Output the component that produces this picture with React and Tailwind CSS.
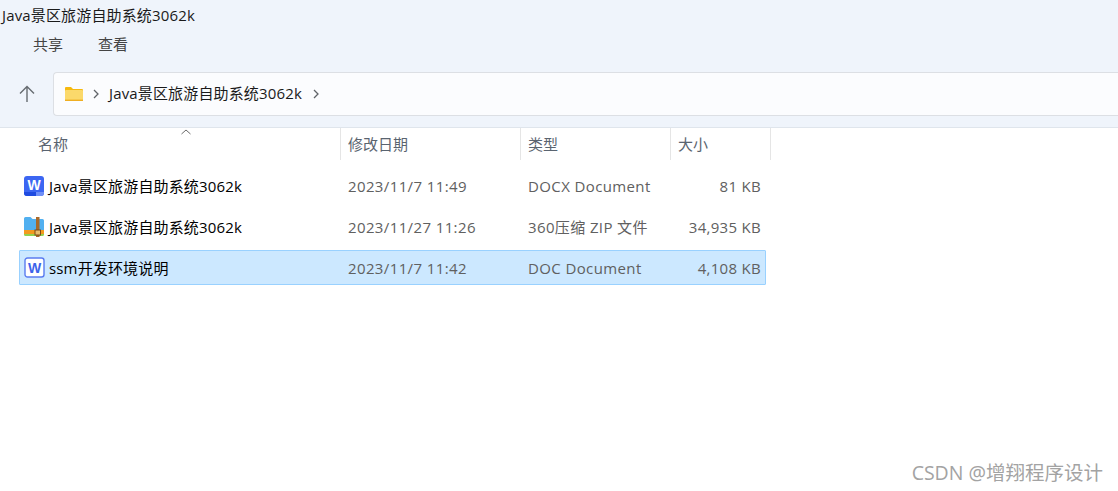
import React from "react";

function WordIcon({ outline }) {
  if (outline) {
    return (
      <svg width="21" height="21" viewBox="0 0 21 21" className="shrink-0">
        <rect x="1" y="1" width="19" height="19" rx="2.5" fill="#ffffff" stroke="#5b7cf0" strokeWidth="1.4" />
        <text x="10.5" y="15.5" textAnchor="middle" fontSize="14" fontWeight="700" fill="#3d63ea" fontFamily="Liberation Sans, sans-serif">W</text>
      </svg>
    );
  }
  return (
    <svg width="20" height="20" viewBox="0 0 20 20" className="shrink-0">
      <rect x="0" y="0" width="20" height="20" rx="3" fill="#3c66f2" />
      <path d="M0 16h12v4H3a3 3 0 0 1-3-3z" fill="#1f4be0" />
      <path d="M12 16h8v1a3 3 0 0 1-3 3h-5z" fill="#6f8ff7" />
      <text x="10" y="14" textAnchor="middle" fontSize="14" fontWeight="700" fill="#ffffff" fontFamily="Liberation Sans, sans-serif">W</text>
    </svg>
  );
}

function ZipIcon() {
  return (
    <svg width="21" height="20" viewBox="0 0 21 20" className="shrink-0">
      <path d="M0 1.5A1.5 1.5 0 0 1 1.5 0h5l2 2h10A1.5 1.5 0 0 1 20 3.5V13H0z" fill="#52b0f0" />
      <rect x="0" y="13" width="20" height="4" fill="#f39a1e" />
      <path d="M0 17h20v.5a1.5 1.5 0 0 1-1.5 1.5h-17A1.5 1.5 0 0 1 0 17.500z" fill="#93d04e" />
      <rect x="12" y="0" width="3.500" height="20" fill="#a8692a" />
      <rect x="11" y="13" width="5.500" height="5" fill="#e8bd6e" stroke="#7c4a18" strokeWidth="1" />
    </svg>
  );
}

function Folder() {
  return (
    <svg width="18" height="14" viewBox="0 0 18 14">
      <path d="M0 1a1 1 0 0 1 1-1h5l2 2h9a1 1 0 0 1 1 1v2H0z" fill="#f6b90f" />
      <rect x="0" y="3" width="18" height="11" rx="1" fill="#fbd96b" />
      <rect x="0" y="12.6" width="18" height="1.4" fill="#efae22" />
    </svg>
  );
}

function Chevron() {
  return (
    <svg width="6" height="10" viewBox="0 0 6 10" className="shrink-0">
      <path d="M1 1l4 4-4 4" fill="none" stroke="#5f6368" strokeWidth="1.3" />
    </svg>
  );
}

function Row({ icon, name, date, type, size, selected }) {
  return (
    <div
      className={
        "flex items-center h-[35px] w-[747px] ml-[19px] border rounded-[1px] " +
        (selected ? "bg-[#cce8ff] border-[#99d1ff]" : "border-transparent")
      }
    >
      <div className="w-[29px] pl-[4px] flex items-center shrink-0">{icon}</div>
      <div className="w-[299px] pt-[2px] text-[15px] tracking-[0.15px] text-black shrink-0">{name}</div>
      <div className="w-[180px] pt-[2px] text-[15px] tracking-[0.38px] text-[#606060] shrink-0">{date}</div>
      <div className="w-[150px] pt-[2px] text-[15px] tracking-[0.38px] text-[#606060] shrink-0">{type}</div>
      <div className="w-[83px] pt-[2px] text-[15px] tracking-[0.3px] text-[#606060] text-right shrink-0">{size}</div>
    </div>
  );
}

function Col({ w, pad = "pl-[7px]", children }) {
  return (
    <div className={"h-[32px] flex items-center border-r border-[#e5e5e5] text-[15px] text-[#5a6470] shrink-0 " + w + " " + pad}>
      {children}
    </div>
  );
}

export default function App() {
  return (
    <div className="w-[1118px] h-[491px] relative overflow-hidden bg-white font-['Open_Sans','Noto_Sans_CJK_SC',sans-serif]">
      <div className="h-[128px] bg-[#eff4fb] border-b border-[#dfe5ec] flex flex-col">
        <div className="h-[30px] pl-[2px] text-[15px] tracking-[0.15px] leading-[30px] text-[#1a1a1a]">Java景区旅游自助系统3062k</div>
        <div className="flex h-[42px] pl-[33px] gap-[35px] text-[15px] leading-[28px] text-[#444]">
          <span>共享</span>
          <span>查看</span>
        </div>
        <div className="flex items-start">
          <div className="w-[53px] h-[44px] flex items-center justify-center">
            <svg width="16" height="18" viewBox="0 0 16 18">
              <path d="M8 17V1.5M1 8.5l7-7 7 7" fill="none" stroke="#666b70" strokeWidth="1.4" />
            </svg>
          </div>
          <div className="flex-1 h-[44px] bg-[#fbfcfe] border border-[#dcdfe4] border-r-0 rounded-l-[4px] flex items-center pl-[11px] text-[15px] tracking-[0.15px] text-[#1a1a1a]">
            <Folder />
            <span className="ml-[10px]"><Chevron /></span>
            <span className="ml-[10px] mb-[2px]">Java景区旅游自助系统3062k</span>
            <span className="ml-[11px]"><Chevron /></span>
          </div>
        </div>
      </div>

      <div className="flex relative">
        <Col w="w-[341px]" pad="pl-[38px]">名称</Col>
        <Col w="w-[180px]">修改日期</Col>
        <Col w="w-[150px]">类型</Col>
        <Col w="w-[100px]">大小</Col>
        <svg width="10" height="6" viewBox="0 0 10 6" className="absolute left-[181px] top-[1px]">
          <path d="M0.5 5L5 1l4.5 4" fill="none" stroke="#6b6b6b" strokeWidth="1" />
        </svg>
      </div>

      <div className="pt-[8px] flex flex-col gap-[6px]">
        <Row icon={<WordIcon />} name="Java景区旅游自助系统3062k" date="2023/11/7 11:49" type="DOCX Document" size="81 KB" />
        <Row icon={<ZipIcon />} name="Java景区旅游自助系统3062k" date="2023/11/27 11:26" type="360压缩 ZIP 文件" size="34,935 KB" />
        <Row selected icon={<WordIcon outline />} name="ssm开发环境说明" date="2023/11/7 11:42" type="DOC Document" size="4,108 KB" />
      </div>

      <div className="absolute right-[15px] bottom-[6px] text-[19.5px] leading-[24px] text-[#a3a3a3]">CSDN @增翔程序设计</div>
    </div>
  );
}
